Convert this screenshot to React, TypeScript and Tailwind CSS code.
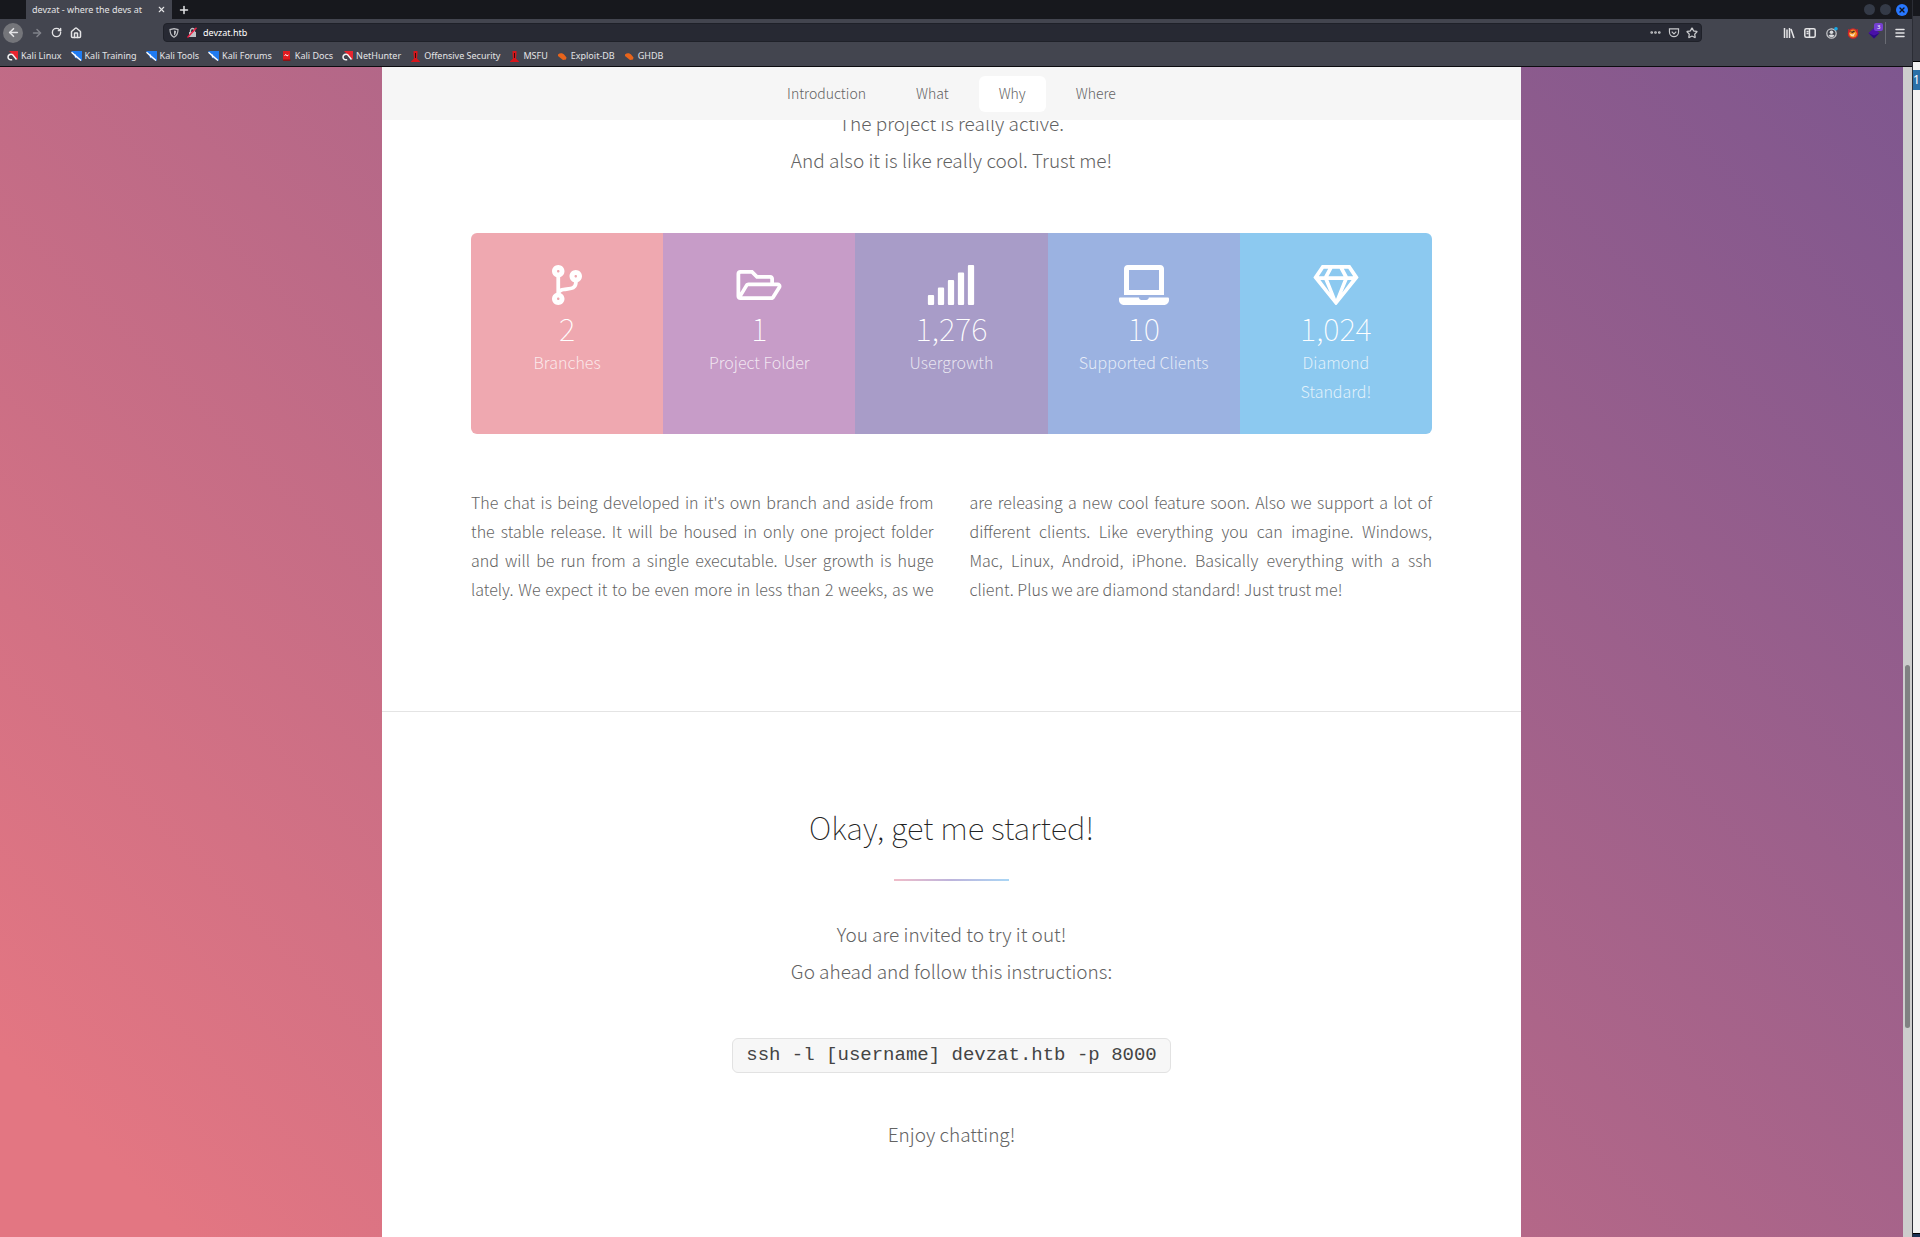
import React from "react";
import { FaCodeBranch, FaRegFolderOpen, FaSignal, FaLaptop, FaRegGem } from "react-icons/fa";
import { ArrowLeft, ArrowRight, RotateCw, House, X, Plus, Ellipsis, Star, Menu } from "lucide-react";

const KaliIcon = () => (
  <svg viewBox="0 0 11 10" className="h-[10px] w-[11px]" aria-hidden="true">
    <path d="M2 0h9v9z" fill="#e8252f" />
    <path d="M9.5 8.5L5.5 3.6C4 2.6 1 3.6 1 6s2 3.2 4.200 2.600" fill="none" stroke="#f4f4f4" strokeWidth="1.500" />
  </svg>
);
const BlueIcon = () => (
  <svg viewBox="0 0 11 10" className="h-[10px] w-[11px]" aria-hidden="true">
    <path d="M0 0h11v10z" fill="#1f7bf2" />
    <path d="M0 0l4 7 7 3z" fill="#2d6fc9" />
    <path d="M.5 1.200L10 9.500M4 3.500l1 3" stroke="#fff" strokeWidth="1.500" />
  </svg>
);
const DocsIcon = () => (
  <svg viewBox="0 0 11 10" className="h-[10px] w-[11px]" aria-hidden="true">
    <path d="M2 0h7v9H2z" fill="#e01b1f" />
    <path d="M2 8.500h7.500V10H2z" fill="#8a1216" />
    <path d="M3.500 4.500l1.500-1 1 1.500 1.500-1" stroke="#fff" fill="none" />
  </svg>
);
const OffsecIcon = () => (
  <svg viewBox="0 0 11 11" className="size-[11px]" aria-hidden="true">
    <path d="M3.500 0h4v3L7 7.500l3 3v.5H1v-.5l3-3L3.500 3z" fill="#d8151b" />
    <path d="M5 2h1v5H5z" fill="#3a0a0c" />
  </svg>
);
const BugIcon = () => (
  <svg viewBox="0 0 11 9" className="h-[9px] w-[11px]" aria-hidden="true">
    <path d="M1 2.500C3 .5 6 1 7.500 3l2 2.500-.5 2-3 .5L3.500 6 1 4z" fill="#e8641b" />
  </svg>
);

const bookmarks = [
  { label: "Kali Linux", Icon: KaliIcon },
  { label: "Kali Training", Icon: BlueIcon },
  { label: "Kali Tools", Icon: BlueIcon },
  { label: "Kali Forums", Icon: BlueIcon },
  { label: "Kali Docs", Icon: DocsIcon },
  { label: "NetHunter", Icon: KaliIcon },
  { label: "Offensive Security", Icon: OffsecIcon },
  { label: "MSFU", Icon: OffsecIcon },
  { label: "Exploit-DB", Icon: BugIcon },
  { label: "GHDB", Icon: BugIcon },
];

const stats = [
  { Icon: FaCodeBranch, value: "2", label: "Branches", bg: "bg-[#efa8b0]" },
  { Icon: FaRegFolderOpen, value: "1", label: "Project Folder", bg: "bg-[#c79cc8]" },
  { Icon: FaSignal, value: "1,276", label: "Usergrowth", bg: "bg-[#a89cc8]" },
  { Icon: FaLaptop, value: "10", label: "Supported Clients", bg: "bg-[#9bb2e1]" },
  { Icon: FaRegGem, value: "1,024", label: "Diamond Standard!", bg: "bg-[#8cc9f0]" },
];

function TitleBar() {
  return (
    <div className="flex h-[19px] shrink-0 items-stretch bg-[#17181d]">
      <div className="ml-[26px] flex w-[146px] items-center justify-between bg-[#43454f] pr-1.5 pl-1.5">
        <span className="whitespace-nowrap text-[9px]">devzat - where the devs at</span>
        <button aria-label="Close tab"><X className="size-[9px]" strokeWidth={3} /></button>
      </div>
      <button aria-label="New tab" className="ml-1.5"><Plus className="size-3" strokeWidth={3} /></button>
      <div className="mr-1 ml-auto flex items-center gap-[5px]">
        <button aria-label="Minimize" className="size-[11px] rounded-full bg-[#343a47]" />
        <button aria-label="Maximize" className="size-[11px] rounded-full bg-[#343a47]" />
        <button aria-label="Close window" className="flex size-3 items-center justify-center rounded-full bg-[#2777ff] text-[#10131c]">
          <X className="size-2" strokeWidth={4} />
        </button>
      </div>
    </div>
  );
}

function Toolbar() {
  return (
    <div className="flex h-[27px] shrink-0 items-center">
      <div className="flex w-[163px] items-center gap-2 pl-[3px]">
        <button aria-label="Back" className="flex size-5 items-center justify-center rounded-full bg-[#74757a]">
          <ArrowLeft className="size-[13px]" strokeWidth={3} />
        </button>
        <button aria-label="Forward" className="text-[#80828a]"><ArrowRight className="size-3" strokeWidth={3} /></button>
        <button aria-label="Reload"><RotateCw className="size-[11px]" strokeWidth={3} /></button>
        <button aria-label="Home"><House className="size-3" strokeWidth={3} /></button>
      </div>
      <div className="flex h-[19px] w-[1539px] shrink items-center rounded-sm border border-[#1f2129] bg-[#272933] pr-[3px] pl-[5px]">
        <svg viewBox="0 0 10 10" className="size-[10px]" aria-hidden="true">
          <path d="M5 .7l4 .9C9 5.500 8 8 5 9.300 2 8 1 5.500 1 1.600z" fill="none" stroke="#bfc0c4" strokeWidth="1.200" />
          <path d="M5 2.500v5C6.500 6.500 7 5 7 3z" fill="#bfc0c4" />
        </svg>
        <svg viewBox="0 0 11 11" className="ml-[8px] h-[11px] w-[11px]" aria-hidden="true">
          <path d="M2 5h7v5H2z" fill="#bfc0c4" />
          <path d="M3.500 5V3.500a2 2 0 0 1 4 0V5" fill="none" stroke="#bfc0c4" strokeWidth="1.300" />
          <path d="M.5 10.500L9.500.8" stroke="#f02046" strokeWidth="1.400" />
        </svg>
        <input aria-label="Address" defaultValue="devzat.htb" className="ml-[5px] min-w-0 flex-1 bg-transparent text-[9px] text-white outline-none" />
        <div className="flex items-center gap-[6px] text-[#c9cacd]">
          <button aria-label="Page actions"><Ellipsis className="size-[13px]" strokeWidth={3} /></button>
          <button aria-label="Save to Pocket">
            <svg viewBox="0 0 12 11" className="h-[10px] w-[12px]" fill="none" stroke="currentColor" strokeWidth="1.300">
              <path d="M1 1h10v3.500a5 5 0 0 1-10 0z" /><path d="M3.500 4L6 6.400 8.500 4" />
            </svg>
          </button>
          <button aria-label="Bookmark this page"><Star className="size-3" strokeWidth={2.5} /></button>
        </div>
      </div>
      <div className="mr-[6px] ml-auto flex items-center">
        <button aria-label="Library">
          <svg viewBox="0 0 12 10" className="h-[10px] w-[12px]" stroke="currentColor" strokeWidth="1.500">
            <path d="M1.500 0v10M4 1.500V10M6.500 0v10M8 1l3 9" />
          </svg>
        </button>
        <button aria-label="Sidebars" className="ml-[9px]">
          <svg viewBox="0 0 12 10" className="h-[10px] w-[12px]" fill="none" stroke="currentColor" strokeWidth="1.500">
            <rect x=".8" y=".8" width="10.400" height="8.400" rx="1.500" /><path d="M5.500 1v8M2.500 3.500h2M2.500 5.500h2" />
          </svg>
        </button>
        <button aria-label="Account" className="relative ml-[10px]">
          <svg viewBox="0 0 12 12" className="size-3">
            <circle cx="5.500" cy="6.500" r="4.700" fill="none" stroke="#c9cacd" strokeWidth="1.200" />
            <circle cx="5.500" cy="5.300" r="1.800" fill="#d8d9dc" /><path d="M2.500 8.500c1.500-1.500 4.500-1.500 6 0-1.500 2-4.500 2-6 0z" fill="#d8d9dc" />
            <circle cx="10" cy="1.800" r="1.800" fill="#17a9e8" />
          </svg>
        </button>
        <button aria-label="Proxy" className="ml-[9px]">
          <svg viewBox="0 0 12 12" className="size-3">
            <circle cx="6" cy="6.500" r="4.600" fill="#f28a1d" stroke="#d3232b" strokeWidth="1.300" />
            <path d="M1 2l3 1.500L2 6zM11 2L8 3.500 10 6z" fill="#d3232b" /><path d="M2.500 4.500l3 0 1.500-1L8 4.500 5.500 6z" fill="#3a2a2a" /><path d="M2.500 6.500l3 1 3-2-2 4-2.500-.5z" fill="#fbdcb5" />
          </svg>
        </button>
        <button aria-label="Extension, 3 notifications" className="relative ml-[9px]">
          <svg viewBox="0 0 12 12" className="size-3"><path d="M6 1l5.500 5L6 11.500.5 6z" fill="#4a10a8" /><path d="M.5 6L6 8.500 11.500 6 6 11.500z" fill="#2c0b80" /></svg>
          <span className="absolute -top-1 left-[6px] rounded-[2px] bg-[#7440d0] px-[3px] text-[6px] leading-[8px] text-white">3</span>
        </button>
        <div className="ml-[5px] h-[22px] w-px bg-[#6a6c74]" />
        <button aria-label="Menu" className="ml-2"><Menu className="size-3" strokeWidth={3} /></button>
      </div>
    </div>
  );
}

function SiteNav() {
  const base = "flex h-[36px] items-center rounded-md px-5";
  return (
    <nav className="relative z-10 flex h-[53px] items-center justify-center gap-[10px] bg-[#f6f6f6] text-[14px] text-[#636363]">
      <a href="#intro" className={base}>Introduction</a>
      <a href="#what" className={base}>What</a>
      <a href="#why" className={base + " bg-white"}>Why</a>
      <a href="#where" className={base}>Where</a>
    </nav>
  );
}

export default function App() {
  return (
    <div className="flex h-screen overflow-hidden bg-[#f2f2f2]">
      <div className="flex min-w-0 flex-1 flex-col border-r border-[#2b2d35] bg-[#43454f] font-['Noto_Sans',sans-serif] text-[#e4e4e6]">
        <TitleBar />
        <Toolbar />
        <div className="flex h-[21px] shrink-0 items-center gap-[9px] border-b border-[#0c0c10] pl-[7px] text-[9px]">
          {bookmarks.map(({ label, Icon }) => (
            <a key={label} href="#bookmark" className="flex items-center gap-[3px] whitespace-nowrap"><Icon />{label}</a>
          ))}
        </div>
        <div className="flex min-h-0 flex-1">
          <div className="flex min-w-0 flex-1 justify-center bg-[linear-gradient(45deg,#e37682_6%,#5f4d93_129%)] font-['Noto_Sans_CJK_SC',sans-serif] font-light text-[#636363]">
            <div className="w-full max-w-[1139px] overflow-hidden bg-white">
              <SiteNav />
              <section id="why" className="-mt-[16px] border-b border-[#e4e4e4] px-[89px] pb-[107px]">
                <p className="text-center text-[19px] leading-[37px]">The project is really active.<br />And also it is like really cool. Trust me!</p>
                <ul className="mt-[55px] grid grid-cols-5 overflow-hidden rounded-md text-center text-white">
                  {stats.map(({ Icon, value, label, bg }) => (
                    <li key={label} className={"flex h-[201px] flex-col items-center px-7 pt-8 " + bg}>
                      <Icon className="h-[40px] w-[50px]" />
                      <strong className="mt-[3px] text-[31px] leading-[40px] font-thin">{value}</strong>
                      <span className="text-[16px] leading-[29px] text-white/75">{label}</span>
                    </li>
                  ))}
                </ul>
                <p className="mt-[54px] columns-2 gap-[36px] text-justify text-[16px] leading-[29px]">
                  The chat is being developed in it's own branch and aside from the stable release. It will be housed in only one project folder and will be run from a single executable. User growth is huge lately. We expect it to be even more in less than 2 weeks, as we are releasing a new cool feature soon. Also we support a lot of different clients. Like everything you can imagine. Windows, Mac, Linux, Android, iPhone. Basically everything with a ssh client. Plus we are diamond standard! Just trust me!
                </p>
              </section>
              <section id="where" className="flex flex-col items-center px-[89px] pt-[87px] text-center text-[19px] leading-[37px]">
                <h2 className="text-[31px] leading-[56px] font-thin text-[#222]">Okay, get me started!</h2>
                <div className="mt-[24px] h-[2px] w-[115px] bg-linear-to-r from-[#f0bcc8] via-[#bdb4dc] to-[#a9d6f5]" />
                <p className="mt-[34px]">You are invited to try it out!<br />Go ahead and follow this instructions:</p>
                <code className="mt-[49px] rounded-md border border-[#e2e2e2] bg-[#f7f7f7] px-[13px] font-['Liberation_Mono',monospace] text-[19px] leading-[33px] font-normal text-[#444]">ssh -l [username] devzat.htb -p 8000</code>
                <p className="mt-[42px]">Enjoy chatting!</p>
              </section>
            </div>
          </div>
          <div className="w-[9px] bg-[#cdcdcd]" role="presentation">
            <div className="mx-auto mt-[598px] h-[363px] w-[5px] rounded-full bg-[#808182]" />
          </div>
        </div>
      </div>
      <aside aria-label="Window behind" className="flex w-[7px] flex-col overflow-hidden text-[12px] text-white">
        <div className="h-4 bg-[#17181d]" />
        <div className="h-[46px] border-b border-black bg-[#3b3d46]" />
        <div className="mt-2 h-5 bg-[#2a70a8] leading-5">1</div>
        <div className="mt-auto h-1 border-t border-black bg-[#1c3154]" />
      </aside>
    </div>
  );
}
